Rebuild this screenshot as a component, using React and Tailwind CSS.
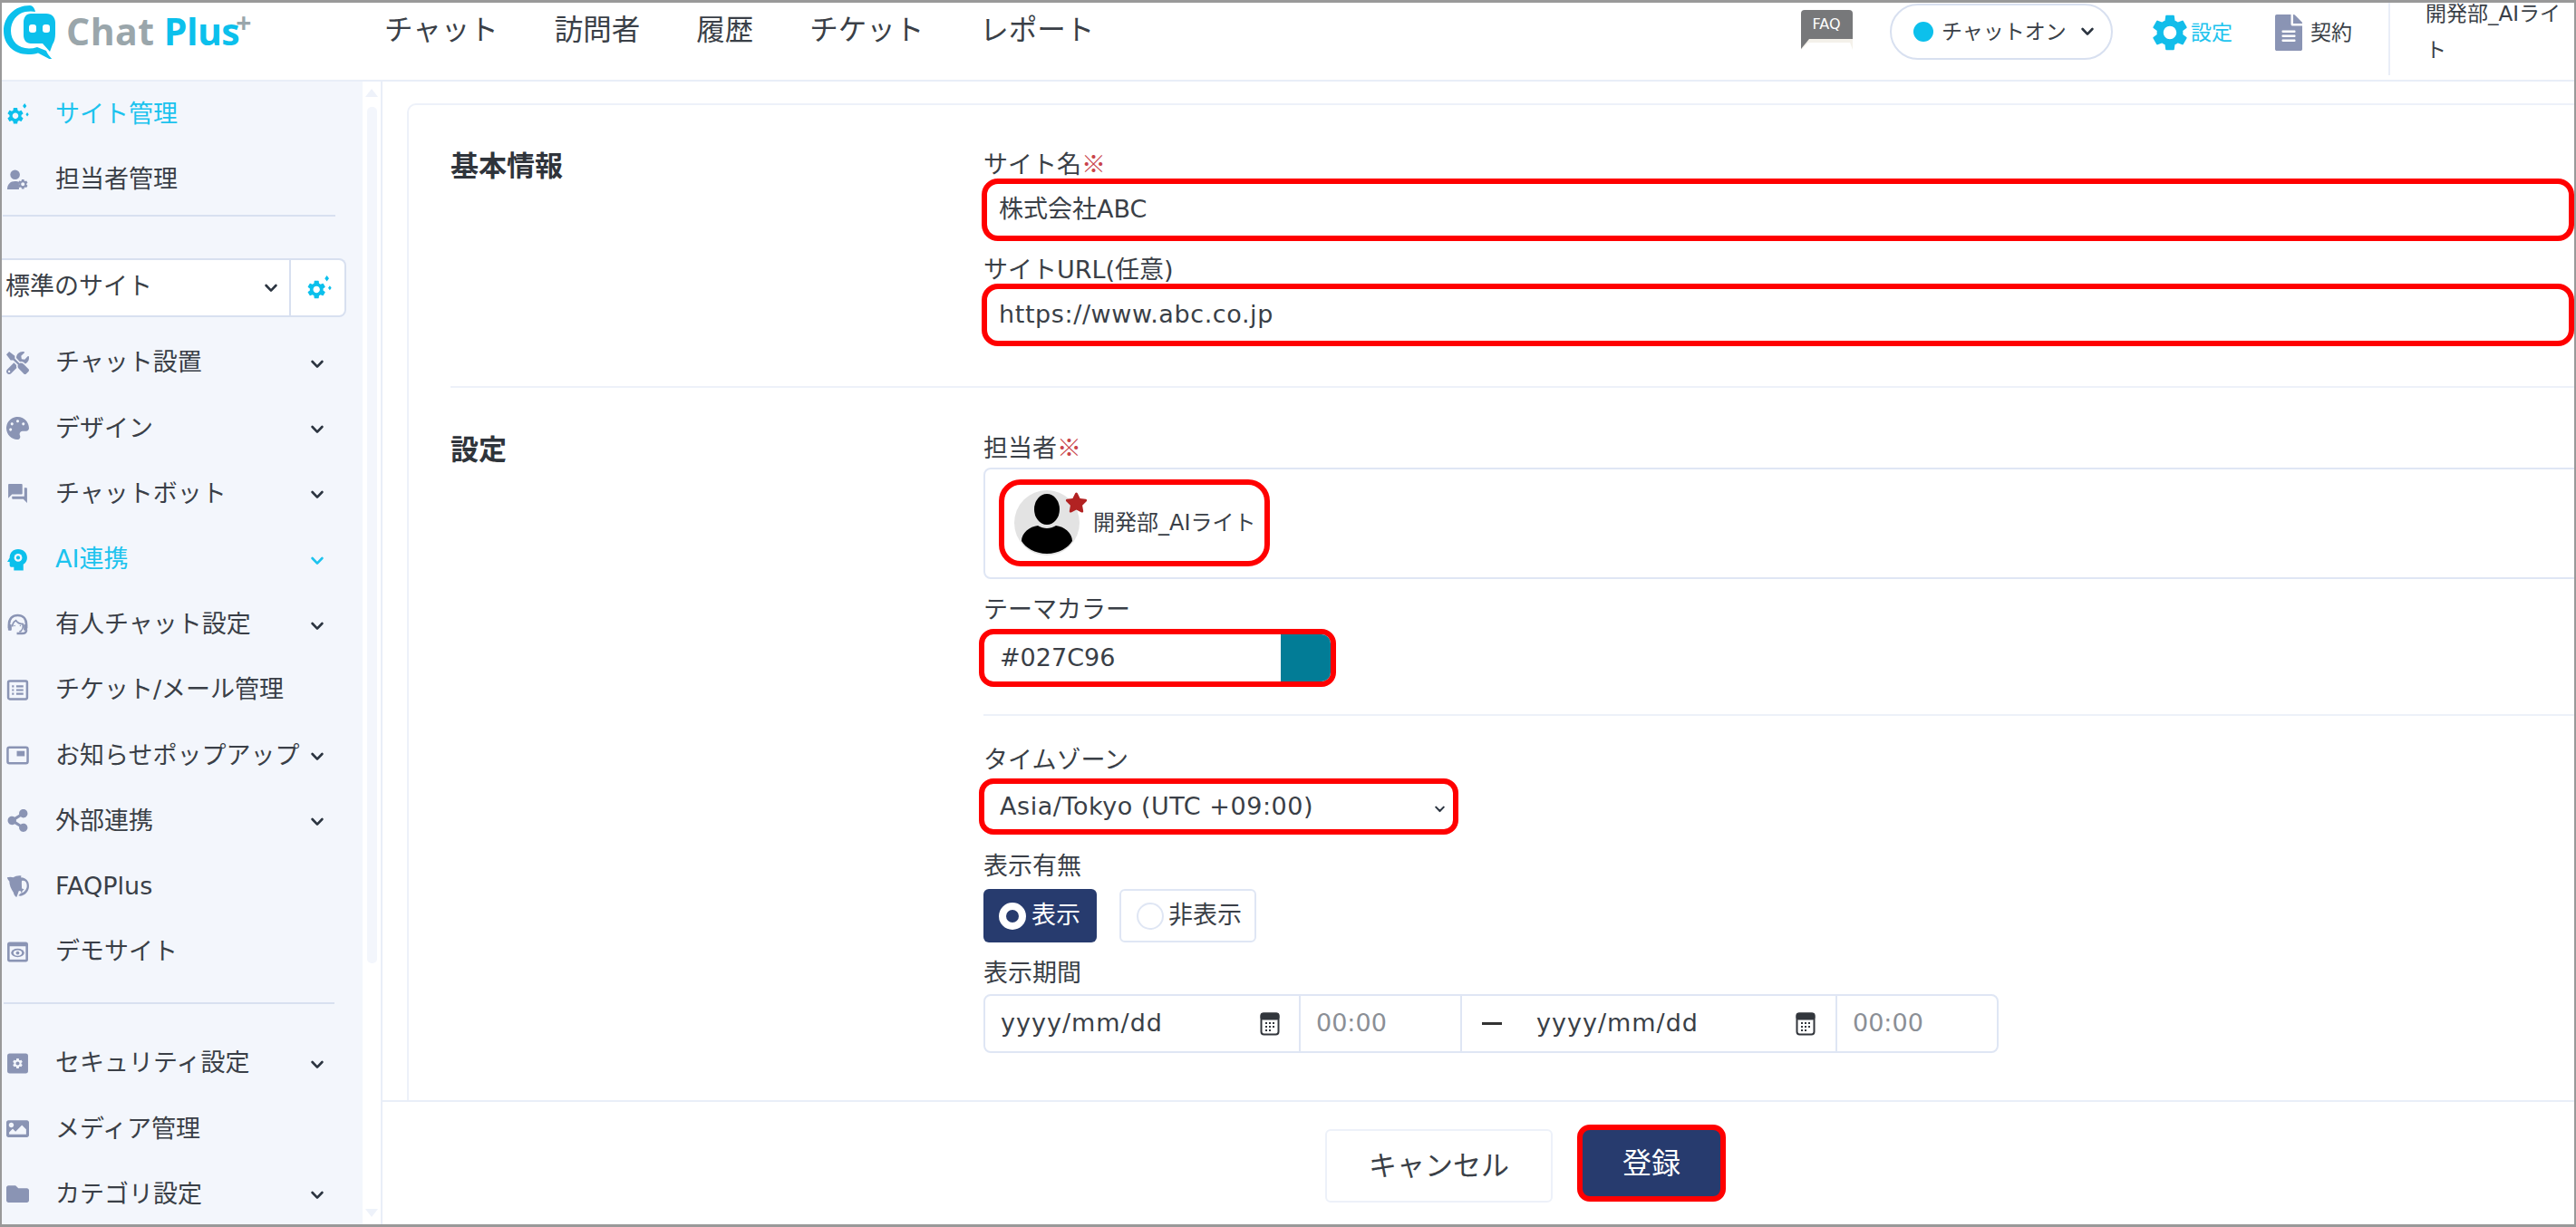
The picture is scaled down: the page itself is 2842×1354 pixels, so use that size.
import { FaTools, FaPalette, FaShareAlt, FaFolder, FaImage, FaStar, FaFileAlt } from 'react-icons/fa';
import { MdForum } from 'react-icons/md';

const GEAR = 'M19.14 12.94c.04-.3.06-.61.06-.94 0-.32-.02-.64-.07-.94l2.03-1.58a.49.49 0 0 0 .12-.61l-1.92-3.32a.488.488 0 0 0-.59-.22l-2.39.96c-.5-.38-1.03-.7-1.62-.94l-.36-2.54a.484.484 0 0 0-.48-.41h-3.84c-.24 0-.43.17-.47.41l-.36 2.54c-.59.24-1.13.57-1.62.94l-2.39-.96c-.22-.08-.47 0-.59.22L2.74 8.87c-.12.21-.08.47.12.61l2.03 1.58c-.05.3-.09.63-.09.94s.02.64.07.94l-2.03 1.58a.49.49 0 0 0-.12.61l1.92 3.32c.12.22.37.29.59.22l2.39-.96c.5.38 1.03.7 1.62.94l.36 2.54c.05.24.24.41.48.41h3.84c.24 0 .44-.17.47-.41l.36-2.54c.59-.24 1.13-.56 1.62-.94l2.39.96c.22.08.47 0 .59-.22l1.92-3.32c.12-.22.07-.47-.12-.61l-2.01-1.58zM12 15.6c-1.98 0-3.6-1.62-3.6-3.6s1.62-3.6 3.6-3.6 3.6 1.62 3.6 3.6-1.62 3.6-3.6 3.6z';

const FONT = 'font-["DejaVu_Sans","Noto_Sans_CJK_JP",sans-serif]';

function Chevron({ className = 'w-[14px] h-[10px] text-[#2b3440]' }) {
  return (
    <svg className={className} viewBox="0 0 14 10" fill="none" stroke="currentColor" strokeWidth="2.6" strokeLinecap="round" strokeLinejoin="round">
      <path d="M1.6 2 7 7.6 12.4 2" />
    </svg>
  );
}

function Logo() {
  return (
    <svg className="w-[58px] h-[60px] shrink-0" viewBox="0 0 58 60">
      <path fill="#0cc0ec" d="M30 1C13 1 1 13.500 1 29c0 15 11 26 27 26 4 0 8-.5 11-1.500L57 63c-4-4-8-9-9-12l-10-4c-3 1-6 1.500-9 1.500C17 48.500 9 40 9 29 9 19 15 10 25 8c4-.8 8-.8 11 0C35 4 33 1 30 1z" />
      <path fill="#0cc0ec" d="M31 10h17c6 0 10 4 10 10v12c0 5-1 9-3 12l-3 8-8-9H31c-5 0-8-4-8-9V20c0-6 3-10 8-10z" />
      <rect x="29" y="22" width="8" height="9" rx="3" fill="#fff" />
      <rect x="44" y="22" width="8" height="9" rx="3" fill="#fff" />
    </svg>
  );
}

function GearSpark({ className }) {
  return (
    <svg className={className} viewBox="0 0 26 26" fill="currentColor">
      <g transform="translate(-1 3) scale(.95)"><path d={GEAR} /></g>
      <path d="M21 0l2.200 3L21 6l-2.200-3zM24 10.500l1.700 2.300-1.700 2.300-1.700-2.300z" />
    </svg>
  );
}

function UserGear({ className }) {
  return (
    <svg className={className} viewBox="0 0 26 26" fill="currentColor">
      <circle cx="10" cy="7" r="5.500" />
      <path d="M1 24c0-6 3.500-9.500 9-9.500 2 0 3.500.4 4.500 1V24z" />
      <g transform="translate(12 11) scale(.58)"><path d={GEAR} /></g>
    </svg>
  );
}

function AiHead({ className }) {
  return (
    <svg className={className} viewBox="0 0 24 24">
      <path fill="currentColor" d="M12.500 1C7 1 3.500 5 3.500 10L1 14.500h2.500V18c0 1.200 1 2 2 2H8v3.500h10V17c2.500-1.500 4-4 4-7 0-5-4-9-9.500-9z" />
      <circle cx="12.500" cy="10" r="4.200" fill="#f3f6fc" />
      <circle cx="12.500" cy="10" r="2" fill="currentColor" />
    </svg>
  );
}

function AgentHead({ className }) {
  return (
    <svg className={className} viewBox="0 0 26 26" fill="none" stroke="currentColor" strokeWidth="2.600">
      <path d="M3 17v-4C3 6 7 2 13 2s10 4 10 11v4" />
      <path d="M7 15c0-4 2-6 4-7 2 3 5 4 8 4 .5 4-1 8-4 9" strokeWidth="1.800" />
      <path d="M2.500 13v6h3v-6zM20.500 13v6h3v-6z" fill="currentColor" strokeWidth="1" />
      <path d="M23 19c0 2.500-2 4-5 4h-6" />
      <circle cx="9.500" cy="14" r=".8" fill="currentColor" strokeWidth="0" />
      <circle cx="16" cy="14" r=".8" fill="currentColor" strokeWidth="0" />
    </svg>
  );
}

function TicketList({ className }) {
  return (
    <svg className={className} viewBox="0 0 24 24" fill="none" stroke="currentColor" strokeWidth="2.400">
      <rect x="2" y="2.500" width="20" height="19" rx="1.500" />
      <path d="M6 8h2M10.500 8H18M6 12h2M10.500 12H18M6 16h2M10.500 16H18" strokeWidth="2" />
    </svg>
  );
}

function PopupBox({ className }) {
  return (
    <svg className={className} viewBox="0 0 26 22" fill="none" stroke="currentColor" strokeWidth="2.600">
      <rect x="1.500" y="2" width="23" height="18" rx="2" />
      <rect x="12" y="6" width="9" height="6" fill="currentColor" stroke="none" />
    </svg>
  );
}

function Dolphin({ className }) {
  return (
    <svg className={className} viewBox="0 0 30 30" fill="currentColor">
      <path d="M1 4c3-1 6-1 8 0 3-2 8-3 11-2l-1 2c4 0 8 2 10 6 2 5 1 11-3 15-3 3-7 4-10 3l3-3c4-1 7-4 8-8 .5-3 0-6-2-8-1.500-1-3-1-4.500-.5-.5 3 0 7 0 10 2 .5 3 1 3 2-2 0-2.500 2-3 4-1-1-1.500-2-2-3l-2 .5c-1 3-2 6-3 8-2-1-3.500-3-4-6C6 19 4 14 4 9 2.500 7.500 1.500 6 1 4z" />
    </svg>
  );
}

function DemoEye({ className }) {
  return (
    <svg className={className} viewBox="0 0 24 24">
      <rect x="1" y="1.500" width="22" height="21" rx="2.500" fill="currentColor" />
      <rect x="3.500" y="6" width="17" height="14" fill="#f3f6fc" />
      <ellipse cx="12" cy="13" rx="7" ry="4.500" fill="currentColor" />
      <ellipse cx="12" cy="13" rx="4.500" ry="3" fill="#f3f6fc" />
      <circle cx="12" cy="13" r="1.800" fill="currentColor" />
    </svg>
  );
}

function SecurityBox({ className }) {
  return (
    <svg className={className} viewBox="0 0 24 24">
      <rect x="1" y="1.500" width="22" height="21" rx="2.500" fill="currentColor" />
      <g transform="translate(5.500 5.500) scale(.54)"><path d={GEAR} fill="#f3f6fc" /></g>
    </svg>
  );
}

function CalendarIcon() {
  return (
    <svg className="w-[22px] h-[26px] text-[#33373d]" viewBox="0 0 22 26" fill="none" stroke="currentColor" strokeWidth="2">
      <rect x="1.500" y="1.500" width="19" height="23" rx="3" />
      <rect x="1.500" y="1.500" width="19" height="6" rx="2" fill="currentColor" />
      <path d="M6 12h2M10 12h2M14 12h2M6 16h2M10 16h2M14 16h2M6 20h2M10 20h2" strokeWidth="2" />
    </svg>
  );
}

const topItems = [
  { label: 'サイト管理', icon: GearSpark, active: true },
  { label: '担当者管理', icon: UserGear },
];

const menuItems = [
  { label: 'チャット設置', icon: FaTools, chevron: true },
  { label: 'デザイン', icon: FaPalette, chevron: true },
  { label: 'チャットボット', icon: MdForum, chevron: true },
  { label: 'AI連携', icon: AiHead, chevron: true, active: true },
  { label: '有人チャット設定', icon: AgentHead, chevron: true },
  { label: 'チケット/メール管理', icon: TicketList },
  { label: 'お知らせポップアップ', icon: PopupBox, chevron: true },
  { label: '外部連携', icon: FaShareAlt, chevron: true },
  { label: 'FAQPlus', icon: Dolphin },
  { label: 'デモサイト', icon: DemoEye },
];

const lowerItems = [
  { label: 'セキュリティ設定', icon: SecurityBox, chevron: true },
  { label: 'メディア管理', icon: FaImage },
  { label: 'カテゴリ設定', icon: FaFolder, chevron: true },
];

function SideItem({ item }) {
  const Icon = item.icon;
  return (
    <div className={`h-[72.2px] flex items-center ${item.active ? 'text-[#1cc3ee]' : 'text-[#3a3f47]'}`}>
      <span className={`w-[59px] shrink-0 pl-[5px] flex ${item.active ? 'text-[#0cc0ec]' : 'text-[#8a94b4]'}`}>
        <Icon className="w-[25px] h-[25px]" />
      </span>
      <span className="text-[27px] leading-none whitespace-nowrap w-[282px] -mt-[1px]">{item.label}</span>
      {item.chevron && <Chevron className={`w-[14px] h-[10px] mt-[3px] ${item.active ? 'text-[#1cc3ee]' : 'text-[#2b3440]'}`} />}
    </div>
  );
}

function Sidebar() {
  return (
    <aside className="w-[398px] shrink-0 bg-[#f3f6fc] overflow-hidden">
      {topItems.map((item) => <SideItem key={item.label} item={item} />)}
      <div className="ml-[1px] w-[367px] h-[2px] bg-[#d8e0f0] mt-[3px]" />
      <div className="mt-[46px] w-[380px] h-[65px] flex bg-white border-2 border-l-0 border-[#d8e0f0] rounded-r-[8px]">
        <div className="w-[319px] flex items-center pl-[4px] border-r-2 border-[#d8e0f0]">
          <span className="text-[27px] text-[#3a3f47] w-[286px] -mt-[3px]">標準のサイト</span>
          <Chevron />
        </div>
        <div className="flex-1 flex items-center justify-center text-[#0cc0ec]">
          <GearSpark className="w-[28px] h-[28px] ml-[2px]" />
        </div>
      </div>
      <div className="mt-[14px]">
        {menuItems.map((item) => <SideItem key={item.label} item={item} />)}
      </div>
      <div className="ml-[2px] w-[365px] h-[2px] bg-[#d8e0f0] mt-[20px] mb-[29px]" />
      {lowerItems.map((item) => <SideItem key={item.label} item={item} />)}
    </aside>
  );
}

function Scrollbar() {
  return (
    <div className="w-[22px] shrink-0 bg-white border-r-2 border-[#e9eef8] pt-[8px] pb-[8px] flex flex-col items-center">
      <div className="w-0 h-0 border-x-[7px] border-x-transparent border-b-[9px] border-b-[#eef2fa]" />
      <div className="w-[11px] h-[945px] mt-[11px] rounded-[5px] bg-[#f3f6fc]" />
      <div className="flex-1" />
      <div className="w-0 h-0 border-x-[7px] border-x-transparent border-t-[9px] border-t-[#eef2fa]" />
    </div>
  );
}

function Header() {
  return (
    <header className="h-[87px] shrink-0 flex border-b-2 border-[#e9eef8] bg-white overflow-hidden">
      <div className="w-[422px] shrink-0 flex items-start pt-[2px] pl-[1px]">
        <Logo />
        <div className="flex items-start ml-[12px] mt-[1px] font-['Open_Sans',sans-serif] font-bold text-[41px] leading-[56px]">
          <span className="text-[#9aa6ab] tracking-[0.5px]">Chat</span>
          <span className="text-[#0cc0ec] ml-[10px] tracking-[-0.5px]">Plus</span>
          <span className="text-[#9aa6ab] text-[30px] leading-[40px] -mt-[1px] -ml-[4px]">+</span>
        </div>
      </div>
      <nav className="flex gap-[62px] text-[31.5px] leading-none text-[#3a3f47] pt-[15px]">
        <span>チャット</span>
        <span>訪問者</span>
        <span>履歴</span>
        <span>チケット</span>
        <span>レポート</span>
      </nav>
      <div className="flex-1" />
      <div className="w-[58px] mt-[8px] flex flex-col items-center">
        <div className="w-[57px] h-[32px] bg-[#77787a] rounded-t-[4px] text-white text-[16px] leading-[32px] text-center">FAQ</div>
        <svg className="w-[57px] h-[12px]" viewBox="0 0 57 12">
          <polygon points="0,12 0,0 57,0 57,12 54,4 8,4" fill="#f4f1ea" />
          <polygon points="0,11 0,0 9,0" fill="#77787a" />
        </svg>
      </div>
      <div className="ml-[41px] mt-[1px] w-[246px] h-[62px] rounded-full border-2 border-[#d8e0f0] flex items-center pl-[24px]">
        <span className="w-[22px] h-[22px] rounded-full bg-[#0cc0ec] shrink-0" />
        <span className="text-[23px] text-[#3a3f47] ml-[9px] whitespace-nowrap">チャットオン</span>
        <Chevron className="w-[14px] h-[10px] ml-[16px] text-[#2b3440]" />
      </div>
      <div className="ml-[43px] flex items-center h-[66px]">
        <svg className="w-[40px] h-[40px] text-[#12bdea]" viewBox="2 2 20 20" fill="currentColor"><path d={GEAR} /></svg>
        <span className="text-[23px] text-[#1cc3ee] ml-[3px]">設定</span>
      </div>
      <div className="ml-[46px] flex items-center h-[66px]">
        <FaFileAlt className="w-[32px] h-[40px] text-[#8a94b4]" />
        <span className="text-[23px] text-[#3a3f47] ml-[8px]">契約</span>
      </div>
      <div className="ml-[40px] w-[2px] h-[80px] bg-[#e9eef8]" />
      <div className="ml-[39px] mr-[9px] w-[155px] text-[23px] text-[#3a3f47]">
        <div className="leading-[24px] whitespace-nowrap">開発部_AIライ</div>
        <div className="leading-[24px] mt-[16px]">ト</div>
      </div>
    </header>
  );
}

function Field({ label, required, className = 'h-[33px]' }) {
  return (
    <div className={`${className} text-[27px] leading-[36px] text-[#3a3f47] whitespace-nowrap`}>
      {label}
      {required && <span className="font-['Noto_Sans_CJK_JP',sans-serif] text-[#c9434a]">※</span>}
    </div>
  );
}

function RedText({ value, className = '' }) {
  return (
    <div className={`-ml-[2px] w-[1757px] h-[69px] border-[6px] border-[#f00] rounded-[18px] pl-[13px] flex items-center text-[27px] text-[#3a3f47] ${className}`}>
      {value}
    </div>
  );
}

function DateGroup() {
  const dateCell = (
    <>
      <span className="text-[27px] tracking-[1px] text-[#3a3f47]">yyyy/mm/dd</span>
      <span className="flex-1" />
      <CalendarIcon />
    </>
  );
  return (
    <div className="w-[1120px] h-[65px] flex border-2 border-[#dfe6f4] rounded-[8px]">
      <div className="w-[348px] flex items-center pl-[17px] pr-[21px] border-r-2 border-[#dfe6f4]">{dateCell}</div>
      <div className="w-[178px] flex items-center pl-[17px] border-r-2 border-[#dfe6f4] text-[27px] text-[#8b8f96]">00:00</div>
      <div className="w-[414px] flex items-center pl-[22px] pr-[22px] border-r-2 border-[#dfe6f4]">
        <span className="w-[22px] h-[3px] bg-[#333] mr-[38px]" />
        {dateCell}
      </div>
      <div className="flex-1 flex items-center pl-[17px] text-[27px] text-[#8b8f96]">00:00</div>
    </div>
  );
}

function Form() {
  return (
    <div className="ml-[27px] mt-[24px] w-[2500px] h-[1200px] bg-white border-2 border-[#edf1f9] rounded-[10px] pt-[46px]">
      <section className="grid grid-cols-[588px_1fr] pl-[46px]">
        <h2 className="text-[31px] font-bold leading-[42px] text-[#2f343b]">基本情報</h2>
        <div>
          <Field label="サイト名" required className="h-[35px]" />
          <RedText value="株式会社ABC" />
          <Field label="サイトURL(任意)" className="h-[33px] mt-[14px]" />
          <RedText value="https://www.abc.co.jp" className="tracking-[0.6px]" />
        </div>
      </section>
      <div className="ml-[46px] h-[2px] bg-[#edf1f9] mt-[44px]" />
      <section className="grid grid-cols-[588px_1fr] pl-[46px] pt-[47px]">
        <h2 className="text-[31px] font-bold leading-[42px] text-[#2f343b]">設定</h2>
        <div>
          <Field label="担当者" required className="h-[41px]" />
          <div className="h-[123px] border-2 border-[#dfe6f4] rounded-[8px] pt-[11px] pl-[15px]">
            <div className="w-[299px] h-[96px] border-[6px] border-[#f00] rounded-[24px] flex items-center pl-[11px]">
              <div className="relative w-[72px] h-[72px] shrink-0 rounded-full bg-[#e3e3e3] overflow-visible">
                <svg className="w-[72px] h-[72px]" viewBox="0 0 72 72" fill="#000">
                  <ellipse cx="36" cy="21" rx="14" ry="17" />
                  <path d="M8 56c0-9 9-16 18-17 3 2 7 3 10 3s7-1 10-3c9 1 18 8 18 17-4 7-15 14-28 14S12 63 8 56z" />
                </svg>
                <FaStar className="absolute -right-[9px] top-[1px] w-[25px] h-[25px] text-[#b22222]" />
              </div>
              <span className="ml-[15px] text-[24px] text-[#3a3f47] whitespace-nowrap">開発部_AIライト</span>
            </div>
          </div>
          <Field label="テーマカラー" className="h-[39px] mt-[16px]" />
          <div className="-ml-[5px] w-[394px] h-[64px] border-[6px] border-[#f00] rounded-[16px] overflow-hidden flex items-center">
            <span className="flex-1 pl-[17px] text-[27px] text-[#3a3f47]">#027C96</span>
            <span className="w-[55px] h-full bg-[#027c96]" />
          </div>
          <div className="h-[2px] bg-[#edf1f9] mt-[30px]" />
          <Field label="タイムゾーン" className="h-[38px] mt-[31px]" />
          <div className="-ml-[5px] w-[529px] h-[62px] border-[6px] border-[#f00] rounded-[16px] flex items-center pl-[17px] pr-[9px] text-[27px] text-[#3a3f47]">
            <span className="flex-1 tracking-[0.55px]">Asia/Tokyo (UTC +09:00)</span>
            <Chevron className="w-[11px] h-[8px] mt-[6px] text-[#2b3440]" />
          </div>
          <Field label="表示有無" className="h-[43px] mt-[17px]" />
          <div className="flex gap-[25px] h-[59px]">
            <div className="w-[125px] rounded-[6px] bg-[#273b6e] flex items-center pl-[17px] text-white">
              <span className="w-[30px] h-[30px] rounded-full border-[8px] border-white bg-[#273b6e]" />
              <span className="text-[27px] ml-[6px]">表示</span>
            </div>
            <div className="w-[151px] rounded-[6px] border-2 border-[#dfe6f4] flex items-center pl-[17px] text-[#3a3f47]">
              <span className="w-[30px] h-[30px] rounded-full border-2 border-[#dfe6f4]" />
              <span className="text-[27px] ml-[5px]">非表示</span>
            </div>
          </div>
          <Field label="表示期間" className="h-[41px] mt-[16px]" />
          <DateGroup />
        </div>
      </section>
    </div>
  );
}

function Footer() {
  return (
    <div className="h-[137px] shrink-0 bg-white border-t-2 border-[#e9eef8] flex pt-[30px] pl-[1040px]">
      <div className="w-[251px] h-[81px] rounded-[6px] border-2 border-[#edf1f9] flex items-center justify-center text-[31px] text-[#3a3f47]">キャンセル</div>
      <div className="ml-[27px] -mt-[5px] w-[164px] h-[85px] rounded-[14px] border-[6px] border-[#f00] bg-[#273b6e] flex items-center justify-center text-[32px] text-white">登録</div>
    </div>
  );
}

export default function App() {
  return (
    <div className={`w-[2842px] h-[1354px] flex flex-col bg-white border-t-[3px] border-l-2 border-r-2 border-b-[3px] border-[#999] overflow-hidden ${FONT}`}>
      <Header />
      <div className="flex-1 flex min-h-0">
        <Sidebar />
        <Scrollbar />
        <main className="flex-1 min-w-0 flex flex-col overflow-hidden">
          <div className="flex-1 min-h-0 overflow-hidden">
            <Form />
          </div>
          <Footer />
        </main>
      </div>
    </div>
  );
}
